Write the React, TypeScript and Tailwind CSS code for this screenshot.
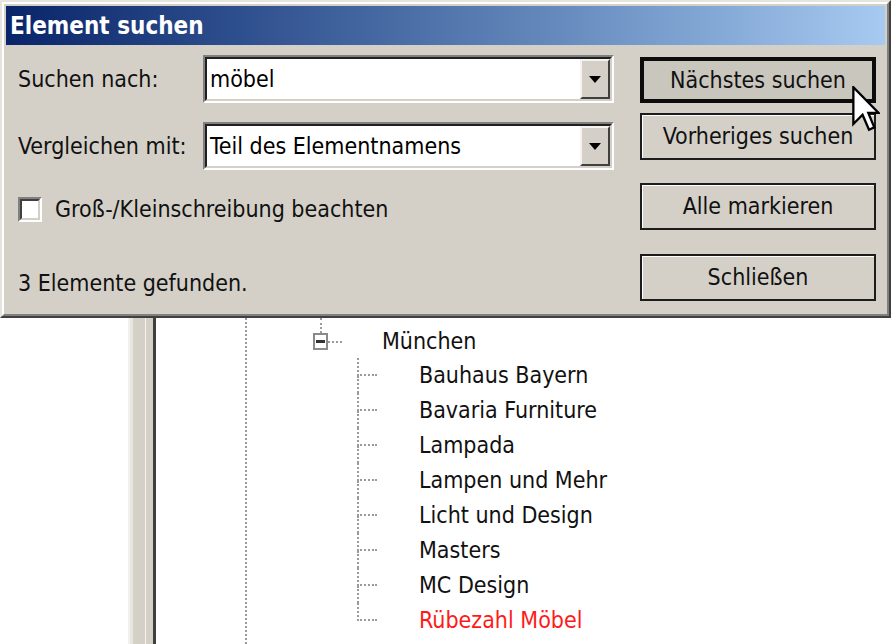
import React from "react";

const FONT = { fontFamily: '"DejaVu Sans Condensed", "DejaVu Sans", Tahoma, sans-serif' };

function DropArrow() {
  return (
    <div className="w-[30px] h-[40px] flex items-center justify-center bg-[#d4d0c8] border-2 border-t-[#f4f3ef] border-l-[#f4f3ef] border-r-[#404040] border-b-[#404040]">
      <svg width="12" height="7" viewBox="0 0 12 7">
        <polygon points="0,0 12,0 6,7" fill="#000" />
      </svg>
    </div>
  );
}

function Combo({ value }: { value: string }) {
  return (
    <div className="w-[411px] h-[48px] border-2 border-t-[#808080] border-l-[#808080] border-r-white border-b-white">
      <div className="h-full border-2 border-t-[#202020] border-l-[#202020] border-r-[#d4d0c8] border-b-[#d4d0c8] bg-white flex items-center">
        <span className="flex-1 pl-[3px] text-[23px] text-black leading-none">{value}</span>
        <DropArrow />
      </div>
    </div>
  );
}

function Button({ label, primary }: { label: string; primary?: boolean }) {
  return (
    <div
      className={
        primary
          ? "h-[46px] w-[236px] border-[4px] border-[#0c0c0c] bg-[#c9c6be] flex items-center justify-center text-[23px] text-[#111]"
          : "h-[47px] w-[236px] border-2 border-[#1c1c1c] bg-[#d4d0c8] shadow-[inset_1px_1px_0_#ffffff] flex items-center justify-center text-[23px] text-[#111]"
      }
    >
      {label}
    </div>
  );
}

const CHILDREN = [
  "Bauhaus Bayern",
  "Bavaria Furniture",
  "Lampada",
  "Lampen und Mehr",
  "Licht und Design",
  "Masters",
  "MC Design",
  "Rübezahl Möbel",
];

function Cursor() {
  return (
    <svg className="absolute left-[852px] top-[86px]" width="28" height="46" viewBox="0 0 12 20">
      <polygon
        points="0.5,0.5 0.5,16.5 4.5,12.5 7.3,19 9.6,18 7,11.7 11.5,11.7"
        fill="#fff"
        stroke="#000"
        strokeWidth="1"
        strokeLinejoin="miter"
      />
    </svg>
  );
}

export default function App() {
  return (
    <div className="relative w-[891px] h-[644px] overflow-hidden bg-white flex flex-col" style={FONT}>
      {/* dialog */}
      <div className="h-[318px] shrink-0 border-2 border-t-[#e6e4de] border-l-[#e6e4de] border-r-[#404040] border-b-[#404040] bg-[#d4d0c8]">
        <div className="h-full border-2 border-t-white border-l-white border-r-[#808080] border-b-[#808080] p-[2px] flex flex-col">
          <div className="h-[39px] shrink-0 bg-linear-to-r from-[#0a246a] to-[#a6caf0] flex items-center pl-[4px]">
            <span className="text-white font-bold text-[24px] leading-none">Element suchen</span>
          </div>
          <div className="flex-1 flex justify-between pr-[9px]">
            <div className="pl-[12px] flex flex-col text-[23px] text-[#111]">
              <div className="mt-[10px] h-[48px] flex items-center">
                <span className="w-[185px]">Suchen nach:</span>
                <Combo value="möbel" />
              </div>
              <div className="mt-[19px] h-[48px] flex items-center">
                <span className="w-[185px]">Vergleichen mit:</span>
                <Combo value="Teil des Elementnamens" />
              </div>
              <div className="mt-[27px] h-[25px] flex items-center gap-[13px]">
                <div className="w-[24px] h-[25px] border-2 border-t-[#808080] border-l-[#808080] border-r-white border-b-white">
                  <div className="h-full border-2 border-t-[#404040] border-l-[#404040] border-r-[#d4d0c8] border-b-[#d4d0c8] bg-white" />
                </div>
                <span>Groß-/Kleinschreibung beachten</span>
              </div>
              <div className="mt-[47px] h-[28px] flex items-center">3 Elemente gefunden.</div>
            </div>
            <div className="mt-[12px] flex flex-col">
              <Button label="Nächstes suchen" primary />
              <div className="mt-[10px]">
                <Button label="Vorheriges suchen" />
              </div>
              <div className="mt-[23px]">
                <Button label="Alle markieren" />
              </div>
              <div className="mt-[24px]">
                <Button label="Schließen" />
              </div>
            </div>
          </div>
        </div>
      </div>

      {/* background window */}
      <div className="flex-1 flex">
        <div className="w-[128px] bg-white" />
        <div className="w-[25px] flex border-l-2 border-[#f2f1ed]">
          <div className="w-[3px] bg-[#e8e6e0]" />
          <div className="w-[12px] bg-[#d4d0c8]" />
          <div className="w-[1px] bg-[#f4f3ef]" />
          <div className="flex-1 bg-[#d4d0c8]" />
        </div>
        <div className="w-[3px] bg-[#404040]" />
        <div className="w-[89px]" />
        <div className="border-l-2 border-dotted border-[#9a9a9a]" />
        <div className="flex-1 pl-[66px] text-[23px] text-[#111] leading-none">
          <div className="h-[40px] flex">
            <div className="w-[15px] flex flex-col items-center">
              <div className="h-[15px] border-l-2 border-dotted border-[#9a9a9a]" />
              <div className="w-[15px] h-[17px] border-2 border-[#8a8a8a] bg-white flex items-center px-[1px]">
                <div className="w-full h-[3px] bg-[#333]" />
              </div>
            </div>
            <div className="mt-[23px] w-[14px] h-0 border-t-2 border-dotted border-[#9a9a9a]" />
            <span className="ml-[40px] mt-[12px]">München</span>
          </div>
          <div className="ml-[44px] flex flex-col">
            {CHILDREN.map((name, i) => {
              const last = i === CHILDREN.length - 1;
              return (
                <div key={name} className="h-[35px] flex">
                  <div className="w-[20px] flex flex-col">
                    <div className="h-[18px] border-l-2 border-b-2 border-dotted border-[#9a9a9a]" />
                    {!last && <div className="flex-1 border-l-2 border-dotted border-[#9a9a9a]" />}
                  </div>
                  <span className={"ml-[42px] self-center " + (last ? "text-[#ff1a1a]" : "")}>{name}</span>
                </div>
              );
            })}
          </div>
        </div>
      </div>
      <Cursor />
    </div>
  );
}
